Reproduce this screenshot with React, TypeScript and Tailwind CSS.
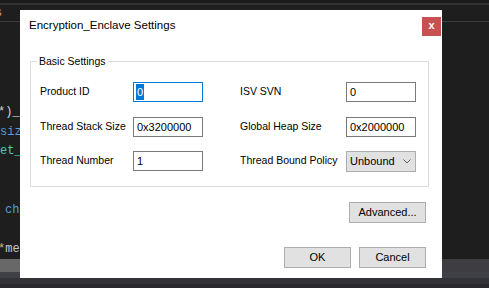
const ui = "font-['Liberation_Sans',Arial,sans-serif]";
const mono = "font-['Liberation_Mono','DejaVu_Sans_Mono',monospace]";

const TextBox = ({ value, focused }: { value: string; focused?: boolean }) => (
  <div
    className={`w-[70px] h-[20px] bg-white border flex items-center pl-[2px] text-[11px] text-black ${
      focused ? "border-[#0078d7]" : "border-[#7a7a7a]"
    }`}
  >
    {focused ? (
      <span className="bg-[#0078d7] text-white px-[1px] leading-[16px]">{value}</span>
    ) : (
      <span className="pl-[1px]">{value}</span>
    )}
  </div>
);

const Button = ({ label, w }: { label: string; w: string }) => (
  <div
    className={`${w} h-[21px] bg-[#e1e1e1] border border-[#adadad] flex items-center justify-center text-[11px] text-black`}
  >
    {label}
  </div>
);

const Row = ({
  left,
  right,
  mt,
}: {
  left: [string, React.ReactNode];
  right: [string, React.ReactNode];
  mt: string;
}) => (
  <div className={`flex items-center h-[20px] ${mt}`}>
    <div className="w-[102px] pl-[9px] text-[10.5px] text-black whitespace-nowrap">{left[0]}</div>
    {left[1]}
    <div className="w-[106px] ml-[37px] text-[10.5px] text-black whitespace-nowrap">{right[0]}</div>
    {right[1]}
  </div>
);

const Editor = () => (
  <div className="w-full h-full flex flex-col">
    <div className="h-[3px] bg-[#191919]" />
    <div className="h-[2px] bg-[#333333]" />
    <div className={`h-[16px] bg-[#1e1e1e] ${mono} text-[12px] leading-[16px] text-[#ce9178] overflow-hidden`}>
      <span className="-ml-[5px] inline-block">s</span>
    </div>
    <div className="h-[1px] bg-[#3c3c3c]" />
    <div className={`flex-1 bg-[#1e1e1e] ${mono} text-[12px] leading-[19.5px] whitespace-pre pt-[81px] overflow-hidden w-[20px]`}>
      <div className="-ml-[2px] text-[#d4d4d4]">*)_</div>
      <div className="text-[#569cd6]">siz</div>
      <div className="text-[#4ec9b0]">et_</div>
      <div>{" "}</div>
      <div>{" "}</div>
      <div className="text-[#569cd6] pl-[5px]">ch</div>
      <div>{" "}</div>
      <div className="-ml-[2px]">
        <span className="text-[#d7ba7d]">*</span>
        <span className="text-[#c8c8c8]">me</span>
      </div>
    </div>
    <div className="h-[13px] bg-[#3e3e42] flex">
      <div className="w-[60px] bg-[#686868]" />
    </div>
    <div className="h-[6px] bg-[#3f3f46]" />
    <div className="h-[6px] bg-[#333337]" />
    <div className="h-[4px] bg-[#29292c]" />
  </div>
);

export default function App() {
  return (
    <div className={`relative w-[489px] h-[288px] overflow-hidden bg-[#1e1e1e] ${ui}`}>
      <Editor />
      <div className="absolute left-[20px] top-[10px] w-[422px] h-[268px] bg-white flex flex-col">
        <div className="flex justify-between items-start h-[41px]">
          <div className="pl-[9px] pt-[7px] text-[11.5px] text-black">Encryption_Enclave Settings</div>
          <div className="mt-[7px] mr-[1px] w-[19px] h-[19px] bg-[#c75050] flex items-center justify-center text-white text-[11px] font-bold leading-none pb-[2px]">
            x
          </div>
        </div>
        <div className="relative ml-[10px] mt-[10px] w-[399px] h-[126px] border border-[#dcdcdc] pt-[20px]">
          <span className="absolute -top-[7px] left-[6px] bg-white px-[2px] text-[10.5px] leading-[12px] text-black">
            Basic Settings
          </span>
          <Row
            mt="mt-0"
            left={["Product ID", <TextBox value="0" focused />]}
            right={["ISV SVN", <TextBox value="0" />]}
          />
          <Row
            mt="mt-[15px]"
            left={["Thread Stack Size", <TextBox value="0x3200000" />]}
            right={["Global Heap Size", <TextBox value="0x2000000" />]}
          />
          <Row
            mt="mt-[14px]"
            left={["Thread Number", <TextBox value="1" />]}
            right={[
              "Thread Bound Policy",
              <div className="w-[70px] h-[21px] bg-[#e1e1e1] border border-[#adadad] flex items-center justify-between pl-[3px] pr-[4px] text-[11px] text-black">
                <span>Unbound</span>
                <svg width="8" height="5" viewBox="0 0 8 5" fill="none">
                  <path d="M0.5 0.5 L4 4 L7.5 0.5" stroke="#606060" strokeWidth="1" />
                </svg>
              </div>,
            ]}
          />
        </div>
        <div className="flex justify-end mt-[15px] pr-[16px]">
          <Button label="Advanced..." w="w-[77px]" />
        </div>
        <div className="flex justify-end gap-[8px] mt-[24px] pr-[16px]">
          <Button label="OK" w="w-[67px]" />
          <Button label="Cancel" w="w-[67px]" />
        </div>
      </div>
    </div>
  );
}
